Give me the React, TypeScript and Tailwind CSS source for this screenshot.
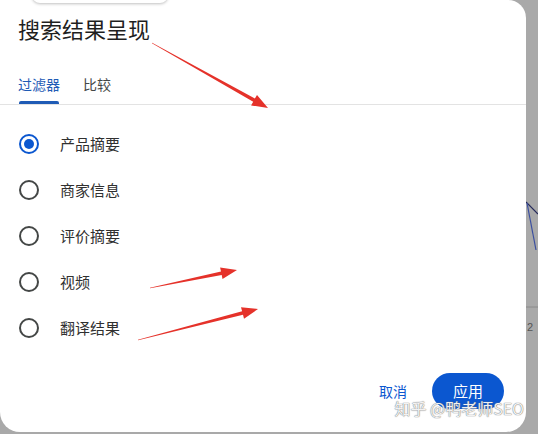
import React from 'react';

const options = ['产品摘要', '商家信息', '评价摘要', '视频', '翻译结果'];

// 红色标注箭头：尾部细，头部粗
const arrowPoints = (x1: number, y1: number, x2: number, y2: number) => {
    const dx = x2 - x1;
    const dy = y2 - y1;
    const len = Math.sqrt(dx * dx + dy * dy);
    const ux = dx / len;
    const uy = dy / len;
    const nx = -uy;
    const ny = ux;
    const headLen = 16;
    const headW = 6;
    const shaftW = 1.8;
    const bx = x2 - ux * headLen;
    const by = y2 - uy * headLen;
    const pts = [
        [x1 + nx * 0.3, y1 + ny * 0.3],
        [bx + nx * shaftW, by + ny * shaftW],
        [bx + nx * headW, by + ny * headW],
        [x2, y2],
        [bx - nx * headW, by - ny * headW],
        [bx - nx * shaftW, by - ny * shaftW],
        [x1 - nx * 0.3, y1 - ny * 0.3],
    ];
    return pts.map(p => `${p[0].toFixed(1)},${p[1].toFixed(1)}`).join(' ');
};

const Radio: React.FC<{ checked?: boolean }> = ({ checked }) => (
    <span
        className={`w-[20px] h-[20px] rounded-full border-2 flex items-center justify-center shrink-0 ${
            checked ? 'border-[#0b57d0]' : 'border-[#444746]'
        }`}
    >
        {checked && <span className="w-[10px] h-[10px] rounded-full bg-[#0b57d0]" />}
    </span>
);

const App: React.FC = () => {
    return (
        <div
            className="w-[538px] h-[434px] bg-[#a9a9a9] flex relative overflow-hidden"
            style={{ fontFamily: '"Noto Sans CJK SC", "Noto Sans", sans-serif' }}
        >
            <div className="w-[526px] h-[432px] bg-white rounded-tr-[18px] rounded-b-[20px] flex flex-col relative">
                {/* 上方浮层的阴影 */}
                <div className="absolute left-[32px] top-[-10px] w-[136px] h-[13px] bg-white rounded-b-[8px] shadow-[0_1px_3px_rgba(0,0,0,0.25)]" />

                <h1 className="pt-[13px] px-[18px] text-[22px] leading-[30px] text-[#1f1f1f] font-normal">
                    搜索结果呈现
                </h1>

                <div className="mt-[31px] flex gap-[23px] px-[18px] border-b border-[#e3e3e3]">
                    <div className="flex flex-col">
                        <span className="text-[14px] leading-[20px] text-[#1f5bb5] pb-[7px]">过滤器</span>
                        <span className="h-[3px] bg-[#1f5bb5] rounded-t-[2px] mx-[1px]" />
                    </div>
                    <div className="flex flex-col">
                        <span className="text-[14px] leading-[20px] text-[#444746] pb-[10px]">比较</span>
                    </div>
                </div>

                <div className="pt-[16px] flex flex-col">
                    {options.map((label, idx) => (
                        <div key={idx} className="h-[46px] flex items-center gap-[21px] pl-[19px]">
                            <Radio checked={idx === 0} />
                            <span className="text-[15px] text-[#303030]">{label}</span>
                        </div>
                    ))}
                </div>

                <div className="mt-auto flex justify-end items-center gap-[25px] pr-[22px] pb-[23px]">
                    <button className="text-[14px] text-[#0b57d0]">取消</button>
                    <button className="w-[72px] h-[36px] rounded-full bg-[#0b57d0] text-white text-[15px]">
                        应用
                    </button>
                </div>

                {/* 水印 */}
                <span className="absolute right-[2px] bottom-[12px] text-[16px] text-white/90 [text-shadow:0_0_1px_#777,0_0_1px_#777]">
                    知乎 @鸭老师SEO
                </span>
            </div>

            <div className="w-[12px] h-full relative">
                <svg width="12" height="434" className="absolute left-0 top-0">
                    <line x1="0" y1="202" x2="12" y2="214" stroke="#23285a" strokeWidth="1.2" />
                    <line x1="1" y1="203" x2="10" y2="250" stroke="#3b4fa0" strokeWidth="1.2" />
                    <line x1="0" y1="307" x2="12" y2="307" stroke="#8a8a8a" strokeWidth="1" />
                </svg>
                <span className="absolute left-[1px] top-[319px] text-[11px] text-[#555]" style={{ fontFamily: '"Liberation Sans", sans-serif' }}>
                    2
                </span>
            </div>

            {/* 标注箭头 */}
            <svg width="538" height="434" className="absolute left-0 top-0 pointer-events-none">
                <polygon points={arrowPoints(152, 43, 268, 108)} fill="#e5322a" />
                <polygon points={arrowPoints(150, 288, 237, 270)} fill="#e5322a" />
                <polygon points={arrowPoints(138, 340, 258, 309)} fill="#e5322a" />
            </svg>
        </div>
    );
};

export default App;
